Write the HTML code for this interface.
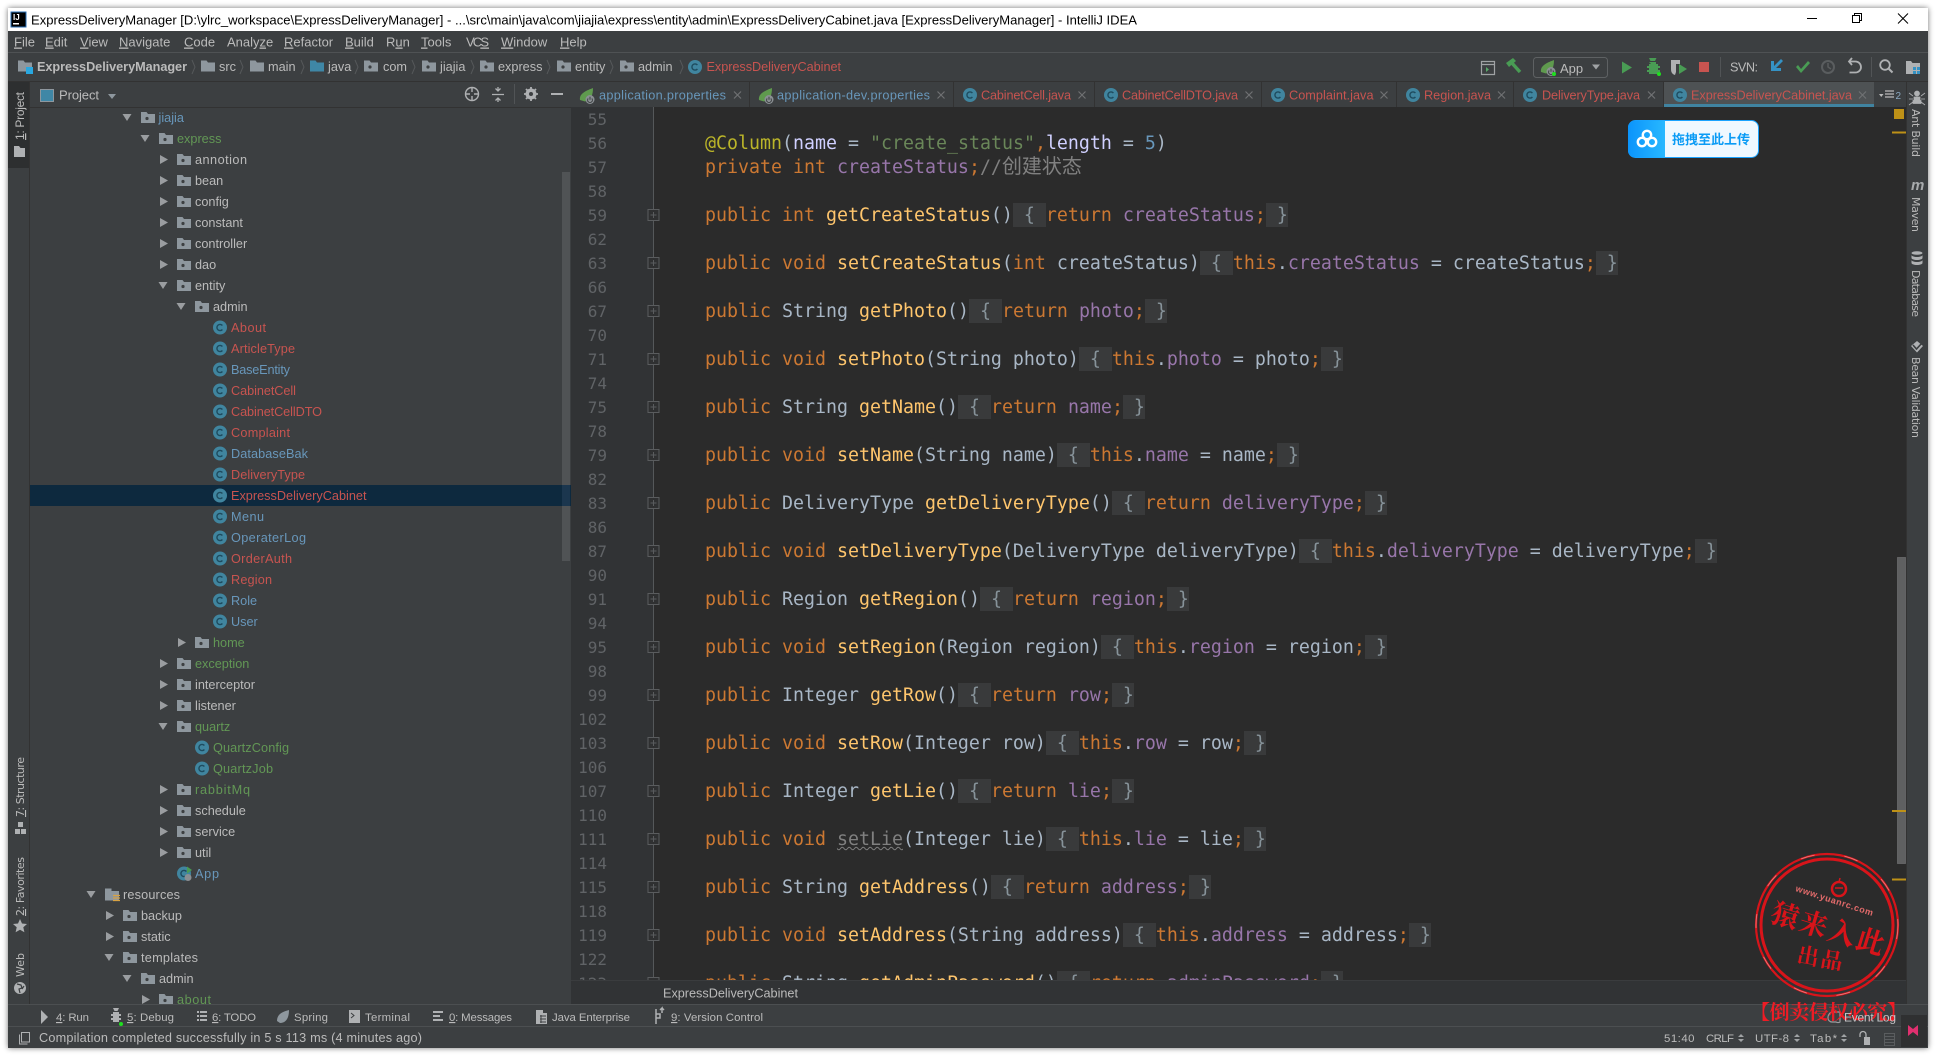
<!DOCTYPE html>
<html><head><meta charset="utf-8"><title>ExpressDeliveryManager</title>
<style>
html,body{margin:0;padding:0;background:#fff;width:1937px;height:1057px;overflow:hidden}
svg{position:absolute;left:0;top:0}
text{font-family:"Liberation Sans","Noto Sans CJK SC",sans-serif;font-size:12.7px;fill:#bbb;white-space:pre}
.r{fill:#c75450}.b{fill:#6897bb}.g{fill:#629755}
.m{font-size:13px;fill:#bbb}
.n{font-family:"DejaVu Sans Mono",monospace;font-size:16px;fill:#606366;text-anchor:end}
.v{font-family:"DejaVu Sans",sans-serif;font-size:11px;fill:#bbb}
.tw{font-size:11.4px}
#code{position:absolute;left:571px;top:107px;width:1335px;height:873px;overflow:hidden}
#code pre{position:absolute;left:134px;margin:0;padding-top:1px;font:18.27px/24px "DejaVu Sans Mono",monospace;color:#a9b7c6;white-space:pre}
#code i{font-style:normal}
.k{color:#cc7832}.y{color:#ffc66d}.f{color:#9876aa}.s{color:#6a8759}.u{color:#6897bb}.a{color:#bbb529}.l{color:#d0d0ff}
.x{display:inline-block;height:23px;background:#393a3b;box-shadow:0 -1px 0 #393a3b;color:#87939a}
.c{color:#808080;font-family:"Noto Sans CJK SC",sans-serif;font-size:20px;line-height:0}
.w{color:#808080;text-decoration:underline wavy #808080 1px}
</style></head><body>
<svg width="1937" height="1057" viewBox="0 0 1937 1057" xmlns="http://www.w3.org/2000/svg">
<defs>
<filter id="bl" x="-5%" y="-5%" width="110%" height="110%"><feGaussianBlur stdDeviation="3"/></filter>
<path id="ac" d="M-3-4.500L5 0-3 4.500z" fill="#9a9da0"/>
<path id="ad" d="M-4.500-3.500H4.500L0 3.500z" fill="#9a9da0"/>
<g id="fd"><path d="M0-5.500h5.500l1.500 2H14V5.500H0z" fill="#8e979e"/><circle cx="6" cy="1" r="1.600" fill="#3c3f41"/></g>
<path id="fp" d="M0-5.500h5.500l1.500 2H14V5.500H0z" fill="#8e979e"/>
<g id="cc"><circle r="7" fill="#40859f"/><path d="M2.400-2A3.100 3.100 0 1 0 2.400 2" fill="none" stroke="#1e4b5e" stroke-width="1.400"/></g>
<g id="sp"><path d="M0 10C-1 4 5 1 13-2 13 5 11 10 5 11.500z" fill="#5f9a4e"/><circle cx="10" cy="9.500" r="4.500" fill="#8a8f93"/><path d="M8.200 8.500a2.400 2.400 0 1 0 3.600 0M10 6.800v3" fill="none" stroke="#3c3f41" stroke-width="1"/></g>
<path id="ch" d="M0-7L3 0 0 7" fill="none" stroke="#55585a" stroke-width="1"/>
<path id="xx" d="M-3.500-3.500L3.500 3.500M3.500-3.500L-3.500 3.500" stroke="#6f7173" stroke-width="1.200" fill="none"/>
<g id="fb"><rect x="-5.500" y="-5.500" width="11" height="11" fill="#2f3031" stroke="#5a5c5e"/><path d="M-3 0H3M0-3V3" stroke="#5a5c5e"/></g>
<path id="ud" d="M-3-1L0-4 3-1zM-3 1L0 4 3 1z" fill="#a0a3a5"/>
</defs>
<rect x="8" y="8" width="1920" height="1040" fill="#000" opacity=".55" filter="url(#bl)"/>
<!-- title -->
<rect x="8" y="8" width="1920" height="23" fill="#fff"/>
<rect x="11" y="12" width="15" height="15" fill="#000" stroke="#2a6fb5" stroke-width="1"/>
<text x="13" y="20" style="font-size:8px;font-weight:bold;fill:#fff">IJ</text><rect x="13" y="23" width="6" height="1.500" fill="#fff"/>
<text x="31" y="24.500" textLength="1106" lengthAdjust="spacingAndGlyphs" style="fill:#000;font-size:12.7px">ExpressDeliveryManager [D:\ylrc_workspace\ExpressDeliveryManager] - ...\src\main\java\com\jiajia\express\entity\admin\ExpressDeliveryCabinet.java [ExpressDeliveryManager] - IntelliJ IDEA</text>
<path d="M1807 18.500H1817" stroke="#000" stroke-width="1"/>
<path d="M1852.500 15.500h7v7h-7zM1854.500 15.500v-2h7v7h-2" fill="none" stroke="#000"/>
<path d="M1898 13.500L1908 23.500M1908 13.500L1898 23.500" stroke="#000"/>
<!-- body -->
<rect x="8" y="31" width="1920" height="1017" fill="#3c3f41"/>
<rect x="8" y="52" width="1920" height="1" fill="#4f5254"/>
<rect x="8" y="81" width="1920" height="1" fill="#323232"/>
<!-- menu -->
<g class="mm">
<text class="m" x="14" y="46.500"><tspan text-decoration="underline">F</tspan>ile</text>
<text class="m" x="45" y="46.500"><tspan text-decoration="underline">E</tspan>dit</text>
<text class="m" x="80" y="46.500"><tspan text-decoration="underline">V</tspan>iew</text>
<text class="m" x="119" y="46.500"><tspan text-decoration="underline">N</tspan>avigate</text>
<text class="m" x="184" y="46.500"><tspan text-decoration="underline">C</tspan>ode</text>
<text class="m" x="227" y="46.500">Analy<tspan text-decoration="underline">z</tspan>e</text>
<text class="m" x="284" y="46.500"><tspan text-decoration="underline">R</tspan>efactor</text>
<text class="m" x="345" y="46.500"><tspan text-decoration="underline">B</tspan>uild</text>
<text class="m" x="386" y="46.500">R<tspan text-decoration="underline">u</tspan>n</text>
<text class="m" x="421" y="46.500"><tspan text-decoration="underline">T</tspan>ools</text>
<text class="m" x="466" y="46.500" textLength="23">VC<tspan text-decoration="underline">S</tspan></text>
<text class="m" x="501" y="46.500"><tspan text-decoration="underline">W</tspan>indow</text>
<text class="m" x="560" y="46.500"><tspan text-decoration="underline">H</tspan>elp</text>
</g>
<!-- nav bar -->
<use href="#fp" x="18" y="66"/><rect x="26" y="67" width="7" height="7" fill="#29a8e0"/>
<text x="37" y="71" textLength="150" style="font-weight:bold">ExpressDeliveryManager</text>
<use href="#ch" x="192" y="67"/>
<use href="#fp" x="201" y="66"/><text x="219" y="71">src</text><use href="#ch" x="240" y="67"/>
<use href="#fp" x="250" y="66"/><text x="268" y="71">main</text><use href="#ch" x="301" y="67"/>
<path transform="translate(310 66)" d="M0-5.500h5.500l1.500 2H14V5.500H0z" fill="#3f87a6"/><text x="328" y="71">java</text><use href="#ch" x="355" y="67"/>
<use href="#fd" x="364" y="66"/><text x="383" y="71">com</text><use href="#ch" x="412" y="67"/>
<use href="#fd" x="422" y="66"/><text x="440" y="71">jiajia</text><use href="#ch" x="471" y="67"/>
<use href="#fd" x="480" y="66"/><text x="498" y="71">express</text><use href="#ch" x="547" y="67"/>
<use href="#fd" x="557" y="66"/><text x="575" y="71">entity</text><use href="#ch" x="610" y="67"/>
<use href="#fd" x="620" y="66"/><text x="638" y="71">admin</text><use href="#ch" x="680" y="67"/>
<use href="#cc" x="695" y="67"/><text class="r" x="706.500" y="71" textLength="134.500">ExpressDeliveryCabinet</text>
<!-- toolbar -->
<path d="M1481.500 61.500h13v13h-13zM1481.500 64.500h13" fill="none" stroke="#a0a3a5" stroke-width="1.200"/><path d="M1486 67l3 2.500-3 2.500z" fill="#59a869"/>
<path d="M1506 63L1513 58 1516 61 1509 67z" fill="#499c54"/><path d="M1511 62L1520 72" stroke="#499c54" stroke-width="3.400"/>
<rect x="1533.500" y="57.500" width="74" height="20" rx="3" fill="none" stroke="#5e6163"/>
<use href="#sp" x="1541" y="62"/><circle cx="1554" cy="74" r="2" fill="#1fe01f"/>
<text x="1560" y="73" style="font-size:13px">App</text><path d="M1592 64.500h8l-4 5z" fill="#a0a3a5"/>
<path d="M1622 61.500L1632 67.500 1622 73.500z" fill="#499c54"/>
<path d="M1649 62h7v2h2v2h2v2h-2v2h2v2h-2v2h-9v-2h-2v-2h2v-2h-2v-2h2v-2h2z M1649 58l1.500 3h4.500l1.500-3" fill="#499c54"/><circle cx="1659" cy="74" r="2" fill="#1fe01f"/>
<path d="M1671 60h9v4h-4v8l-1 3c-3-1-4-3-4-6z" fill="#afb1b3"/><path d="M1679 64l8 5-8 5z" fill="#499c54"/>
<rect x="1699" y="62" width="10" height="10" fill="#c75450"/>
<rect x="1720" y="57" width="1" height="20" fill="#515456"/>
<text x="1730" y="71.500" textLength="28">SVN:</text>
<path d="M1781 59l2 2-7 7h5v3h-10v-10h3v5z" fill="#3592c4"/>
<path d="M1796 67l2-2 3 4 7-8 2 2-9 10z" fill="#499c54"/>
<circle cx="1828" cy="67" r="6" fill="none" stroke="#5a5d5f" stroke-width="2"/><path d="M1828 63v4l3 2" fill="none" stroke="#5a5d5f" stroke-width="1.500"/>
<path d="M1852 58l-3 3.500 3 3.500M1849.500 61.500h6a4.800 4.800 0 0 1 0 11h-6" fill="none" stroke="#afb1b3" stroke-width="1.800"/>
<rect x="1871" y="57" width="1" height="20" fill="#515456"/>
<circle cx="1885" cy="65" r="4.800" fill="none" stroke="#afb1b3" stroke-width="1.800"/><path d="M1888.500 68.500l4 4" stroke="#afb1b3" stroke-width="2"/>
<path d="M1906 61h5l1.500 2H1920v11h-14z" fill="#afb1b3"/><rect x="1913" y="67" width="3" height="3" fill="#3592c4"/><rect x="1917" y="67" width="3" height="3" fill="#3592c4"/><rect x="1913" y="71" width="3" height="3" fill="#3592c4"/><rect x="1917" y="71" width="3" height="3" fill="#3592c4"/>
<!-- left strip -->
<rect x="8" y="82" width="21" height="86" fill="#2d2f30"/>
<rect x="29" y="82" width="1" height="922" fill="#323232"/>
<text class="v" transform="translate(24 140) rotate(-90)" textLength="48" style="font-family:'Liberation Sans';font-size:12px"><tspan text-decoration="underline">1</tspan>: Project</text>
<path d="M14 146h5l1.500 2H25v9H14z" fill="#afb1b3"/>
<text class="v" transform="translate(24 817) rotate(-90)" textLength="60"><tspan text-decoration="underline">7</tspan>: Structure</text>
<path d="M18 822h5v5h-5zM15 829h5v5h-5zM21 829h5v5h-5z" fill="#afb1b3"/>
<text class="v" transform="translate(24 916) rotate(-90)" textLength="59"><tspan text-decoration="underline">2</tspan>: Favorites</text>
<path d="M20 919l2 4.500 5 .5-3.700 3.300 1.100 5-4.400-2.600-4.400 2.600 1.100-5L13 924l5-.5z" fill="#afb1b3"/>
<text class="v" transform="translate(24 977) rotate(-90)" textLength="24">Web</text>
<circle cx="20" cy="988" r="6" fill="#afb1b3"/><path d="M17 984l4 1 1 3-3 1 1 4M24 986l-2 3" fill="none" stroke="#3c3f41" stroke-width="1.200"/>
<!-- project header -->
<rect x="40.500" y="89.500" width="13" height="12" fill="#3f87a6" stroke="#8e979e"/>
<text x="59" y="99.500" style="font-size:13px" textLength="40">Project</text><path d="M108 94h8l-4 5z" fill="#8e979e"/>
<circle cx="472" cy="94" r="6.500" fill="none" stroke="#afb1b3" stroke-width="1.400"/><path d="M472 87v5M472 96v5M465 94h5M474 94h5" stroke="#afb1b3" stroke-width="1.400"/>
<path d="M492 94.500h12M498 87v4M495.500 88.500l2.500 2.500 2.500-2.500M498 102v-4M495.500 100.500l2.500-2.500 2.500 2.500" fill="none" stroke="#afb1b3" stroke-width="1.300"/>
<rect x="514" y="84" width="1" height="20" fill="#515456"/>
<circle cx="531" cy="94" r="4" fill="none" stroke="#afb1b3" stroke-width="3"/><path d="M531 87v14M524 94h14M526 89l10 10M536 89l-10 10" stroke="#afb1b3" stroke-width="1.800"/><circle cx="531" cy="94" r="2" fill="#3c3f41"/>
<rect x="551" y="93" width="12" height="2" fill="#afb1b3"/>
<rect x="30" y="107" width="541" height="1" fill="#323232"/>
<!-- tree -->
<rect x="562" y="172" width="8" height="389" fill="#505355"/>
<rect x="30" y="485" width="541" height="21" fill="#0d293e"/>
<rect x="562" y="485" width="8" height="21" fill="#24405a" opacity=".6"/>
<g transform="translate(0 -.5)">
<use href="#ad" x="127" y="118"/><use href="#fd" x="141" y="118"/><text class="b" x="158.500" y="122.500">jiajia</text>
<use href="#ad" x="145" y="139"/><use href="#fd" x="159" y="139"/><text class="g" x="177" y="143.500">express</text>
<use href="#ac" x="163" y="160"/><use href="#fd" x="177" y="160"/><text x="195" y="164.500" textLength="52">annotion</text>
<use href="#ac" x="163" y="181"/><use href="#fd" x="177" y="181"/><text x="195" y="185.500">bean</text>
<use href="#ac" x="163" y="202"/><use href="#fd" x="177" y="202"/><text x="195" y="206.500">config</text>
<use href="#ac" x="163" y="223"/><use href="#fd" x="177" y="223"/><text x="195" y="227.500">constant</text>
<use href="#ac" x="163" y="244"/><use href="#fd" x="177" y="244"/><text x="195" y="248.500">controller</text>
<use href="#ac" x="163" y="265"/><use href="#fd" x="177" y="265"/><text x="195" y="269.500">dao</text>
<use href="#ad" x="163" y="286"/><use href="#fd" x="177" y="286"/><text x="195" y="290.500">entity</text>
<use href="#ad" x="181" y="307"/><use href="#fd" x="195" y="307"/><text x="213" y="311.500">admin</text>
<use href="#cc" x="220" y="328"/><text class="r" x="231" y="332.500" textLength="35">About</text>
<use href="#cc" x="220" y="349"/><text class="r" x="231" y="353.500" textLength="64">ArticleType</text>
<use href="#cc" x="220" y="370"/><text class="b" x="231" y="374.500" textLength="59">BaseEntity</text>
<use href="#cc" x="220" y="391"/><text class="r" x="231" y="395.500" textLength="65">CabinetCell</text>
<use href="#cc" x="220" y="412"/><text class="r" x="231" y="416.500" textLength="91">CabinetCellDTO</text>
<use href="#cc" x="220" y="433"/><text class="r" x="231" y="437.500" textLength="59">Complaint</text>
<use href="#cc" x="220" y="454"/><text class="b" x="231" y="458.500" textLength="77">DatabaseBak</text>
<use href="#cc" x="220" y="475"/><text class="r" x="231" y="479.500" textLength="74">DeliveryType</text>
<use href="#cc" x="220" y="496"/><text class="r" x="231" y="500.500" textLength="135.500">ExpressDeliveryCabinet</text>
<use href="#cc" x="220" y="517"/><text class="b" x="231" y="521.500" textLength="33">Menu</text>
<use href="#cc" x="220" y="538"/><text class="b" x="231" y="542.500" textLength="75">OperaterLog</text>
<use href="#cc" x="220" y="559"/><text class="r" x="231" y="563.500" textLength="61">OrderAuth</text>
<use href="#cc" x="220" y="580"/><text class="r" x="231" y="584.500" textLength="41">Region</text>
<use href="#cc" x="220" y="601"/><text class="b" x="231" y="605.500">Role</text>
<use href="#cc" x="220" y="622"/><text class="b" x="231" y="626.500">User</text>
<use href="#ac" x="181" y="643"/><use href="#fd" x="195" y="643"/><text class="g" x="213" y="647.500">home</text>
<use href="#ac" x="163" y="664"/><use href="#fd" x="177" y="664"/><text class="g" x="195" y="668.500">exception</text>
<use href="#ac" x="163" y="685"/><use href="#fd" x="177" y="685"/><text x="195" y="689.500">interceptor</text>
<use href="#ac" x="163" y="706"/><use href="#fd" x="177" y="706"/><text x="195" y="710.500">listener</text>
<use href="#ad" x="163" y="727"/><use href="#fd" x="177" y="727"/><text class="g" x="195" y="731.500">quartz</text>
<use href="#cc" x="202" y="748"/><text class="g" x="213" y="752.500" textLength="76">QuartzConfig</text>
<use href="#cc" x="202" y="769"/><text class="g" x="213" y="773.500" textLength="60">QuartzJob</text>
<use href="#ac" x="163" y="790"/><use href="#fd" x="177" y="790"/><text class="g" x="195" y="794.500" textLength="55">rabbitMq</text>
<use href="#ac" x="163" y="811"/><use href="#fd" x="177" y="811"/><text x="195" y="815.500">schedule</text>
<use href="#ac" x="163" y="832"/><use href="#fd" x="177" y="832"/><text x="195" y="836.500">service</text>
<use href="#ac" x="163" y="853"/><use href="#fd" x="177" y="853"/><text x="195" y="857.500">util</text>
<use href="#cc" x="184" y="874"/><circle cx="188" cy="878" r="3.500" fill="#8a8f93"/><path d="M187 867l5 3.500-5 3.500z" fill="#499c54"/><text class="b" x="195" y="878.500" textLength="24">App</text>
<use href="#ad" x="91" y="895"/><path transform="translate(105 895)" d="M0-6h6.500v2.500H14V6H0z" fill="#8e979e"/><path d="M113 896h7M113 898.500h7M113 901h7" stroke="#d9a343" stroke-width="1.200"/><text x="123" y="899.500" textLength="57">resources</text>
<use href="#ac" x="109" y="916"/><use href="#fd" x="123" y="916"/><text x="141" y="920.500">backup</text>
<use href="#ac" x="109" y="937"/><use href="#fd" x="123" y="937"/><text x="141" y="941.500">static</text>
<use href="#ad" x="109" y="958"/><use href="#fd" x="123" y="958"/><text x="141" y="962.500" textLength="57">templates</text>
<use href="#ad" x="127" y="979"/><use href="#fd" x="141" y="979"/><text x="159" y="983.500">admin</text>
<use href="#ac" x="145" y="1000"/><use href="#fd" x="159" y="1000"/><text class="g" x="177" y="1004.500" textLength="34">about</text>
</g>
<!-- tabs -->
<rect x="1664" y="82" width="210" height="25" fill="#4e5254"/>
<rect x="1664" y="104" width="210" height="3" fill="#4083a0"/>
<use href="#sp" x="580" y="90"/><text class="b" x="599" y="99.500" textLength="127">application.properties</text><use href="#xx" x="737.500" y="95"/>
<use href="#sp" x="759" y="90"/><text class="b" x="777" y="99.500" textLength="153">application-dev.properties</text><use href="#xx" x="941" y="95"/>
<use href="#cc" x="970" y="95"/><text class="r" x="981" y="99.500" textLength="90">CabinetCell.java</text><use href="#xx" x="1082" y="95"/>
<use href="#cc" x="1111" y="95"/><text class="r" x="1122" y="99.500" textLength="116">CabinetCellDTO.java</text><use href="#xx" x="1249" y="95"/>
<use href="#cc" x="1278" y="95"/><text class="r" x="1289" y="99.500" textLength="84.500">Complaint.java</text><use href="#xx" x="1384" y="95"/>
<use href="#cc" x="1413" y="95"/><text class="r" x="1424" y="99.500" textLength="67">Region.java</text><use href="#xx" x="1501.500" y="95"/>
<use href="#cc" x="1530" y="95"/><text class="r" x="1542" y="99.500" textLength="98">DeliveryType.java</text><use href="#xx" x="1651.500" y="95"/>
<use href="#cc" x="1680" y="95"/><text class="r" x="1691" y="99.500" textLength="161">ExpressDeliveryCabinet.java</text><use href="#xx" x="1862.500" y="95"/>
<rect x="749" y="82" width="1" height="25" fill="#323232"/><rect x="953" y="82" width="1" height="25" fill="#323232"/><rect x="1094" y="82" width="1" height="25" fill="#323232"/><rect x="1261" y="82" width="1" height="25" fill="#323232"/><rect x="1396" y="82" width="1" height="25" fill="#323232"/><rect x="1513" y="82" width="1" height="25" fill="#323232"/><rect x="1663" y="82" width="1" height="25" fill="#323232"/>
<path d="M1879 94h4.500l-2.250 3z" fill="#bbb"/><path d="M1885 91h9M1885 94h9M1885 97h9" stroke="#bbb" stroke-width="1.300"/>
<text x="1895.500" y="99" style="font-size:10px;fill:#8aa8c0">2</text>
<!-- editor -->
<rect x="571" y="107" width="1335" height="873" fill="#2b2b2b"/>
<rect x="571" y="107" width="83" height="873" fill="#313335"/>
<rect x="653" y="107" width="1" height="873" fill="#55585a"/>
<g class="nn">
<text class="n" x="607" y="125">55</text><text class="n" x="607" y="149">56</text><text class="n" x="607" y="173">57</text><text class="n" x="607" y="197">58</text><text class="n" x="607" y="221">59</text><text class="n" x="607" y="245">62</text><text class="n" x="607" y="269">63</text><text class="n" x="607" y="293">66</text><text class="n" x="607" y="317">67</text><text class="n" x="607" y="341">70</text><text class="n" x="607" y="365">71</text><text class="n" x="607" y="389">74</text><text class="n" x="607" y="413">75</text><text class="n" x="607" y="437">78</text><text class="n" x="607" y="461">79</text><text class="n" x="607" y="485">82</text><text class="n" x="607" y="509">83</text><text class="n" x="607" y="533">86</text><text class="n" x="607" y="557">87</text><text class="n" x="607" y="581">90</text><text class="n" x="607" y="605">91</text><text class="n" x="607" y="629">94</text><text class="n" x="607" y="653">95</text><text class="n" x="607" y="677">98</text><text class="n" x="607" y="701">99</text><text class="n" x="607" y="725">102</text><text class="n" x="607" y="749">103</text><text class="n" x="607" y="773">106</text><text class="n" x="607" y="797">107</text><text class="n" x="607" y="821">110</text><text class="n" x="607" y="845">111</text><text class="n" x="607" y="869">114</text><text class="n" x="607" y="893">115</text><text class="n" x="607" y="917">118</text><text class="n" x="607" y="941">119</text><text class="n" x="607" y="965">122</text><text class="n" x="607" y="989">123</text>
</g>
<use href="#fb" x="653.500" y="215"/><use href="#fb" x="653.500" y="263"/><use href="#fb" x="653.500" y="311"/><use href="#fb" x="653.500" y="359"/><use href="#fb" x="653.500" y="407"/><use href="#fb" x="653.500" y="455"/><use href="#fb" x="653.500" y="503"/><use href="#fb" x="653.500" y="551"/><use href="#fb" x="653.500" y="599"/><use href="#fb" x="653.500" y="647"/><use href="#fb" x="653.500" y="695"/><use href="#fb" x="653.500" y="743"/><use href="#fb" x="653.500" y="791"/><use href="#fb" x="653.500" y="839"/><use href="#fb" x="653.500" y="887"/><use href="#fb" x="653.500" y="935"/><use href="#fb" x="653.500" y="983"/>
<!-- breadcrumb & bars -->
<rect x="571" y="980" width="1335" height="24" fill="#313335"/>
<rect x="571" y="980" width="1335" height="1" fill="#3a3c3e"/>
<text x="663" y="997.500" textLength="135">ExpressDeliveryCabinet</text>
<rect x="8" y="1004" width="1920" height="44" fill="#3c3f41"/>
<rect x="8" y="1004" width="1920" height="1" fill="#4c4f51"/>
<rect x="8" y="1026" width="1920" height="1" fill="#4c4f51"/>
<!-- scrollbar -->
<rect x="1897.500" y="557.500" width="8" height="306" fill="#5f6061" stroke="#6a6b6c" stroke-width=".8"/>
<rect x="1894" y="109" width="10" height="10" fill="#be9117"/>
<rect x="1892" y="131.500" width="14" height="2" fill="#be9117"/>
<rect x="1892" y="810" width="14" height="2" fill="#be9117"/>
<rect x="1892" y="878.500" width="14" height="2" fill="#be9117"/>
<!-- right strip -->
<rect x="1906" y="82" width="22" height="922" fill="#3c3f41"/>
<rect x="1906" y="82" width="1" height="922" fill="#323232"/>
<path d="M1917 91a2.500 2.500 0 1 1 0 5 2.500 2.500 0 1 1 0-5zM1914 97h6v3h-6zM1913 100.500h8v3h-8zM1909 93l4 3M1925 93l-4 3M1909 99h4M1925 99h-4M1909 105l4-3M1925 105l-4-3" fill="#afb1b3" stroke="#afb1b3" stroke-width=".8"/>
<text class="v" transform="translate(1912 109) rotate(90)" textLength="48">Ant Build</text>
<text x="1911" y="190" style="font-size:15px;font-weight:bold;font-style:italic;fill:#a8abad" textLength="13">m</text>
<text class="v" transform="translate(1912 197) rotate(90)" textLength="35">Maven</text>
<ellipse cx="1917" cy="253" rx="5.500" ry="1.800" fill="#afb1b3"/><path d="M1911.500 255v3c0 1 2.500 2 5.500 2s5.500-1 5.500-2v-3c0 1-2.500 2-5.500 2s-5.500-1-5.500-2zM1911.500 260v3c0 1 2.500 2 5.500 2s5.500-1 5.500-2v-3c0 1-2.500 2-5.500 2s-5.500-1-5.500-2z" fill="#afb1b3"/>
<text class="v" transform="translate(1912 270) rotate(90)" textLength="47">Database</text>
<path d="M1917 341l6 5-6 6.500-6-6.500z" fill="#afb1b3"/><path d="M1913 345l3.500 4 5.500-6" fill="none" stroke="#3c3f41" stroke-width="1.600"/>
<text class="v" transform="translate(1912 357) rotate(90)" textLength="81">Bean Validation</text>
<!-- tool window buttons -->
<path d="M41 1010l7 7-7 7z" fill="#afb1b3"/><text class="tw" x="56" y="1021" textLength="33"><tspan text-decoration="underline">4</tspan>: Run</text>
<path d="M113 1012h6v2h2v2h-2v2h2v2h-2v2h-6v-2h-2v-2h2v-2h-2v-2h2zM113 1008l1.500 3h3l1.500-3" fill="#afb1b3"/><circle cx="121" cy="1024" r="2" fill="#1fe01f"/><text class="tw" x="127" y="1021" textLength="47"><tspan text-decoration="underline">5</tspan>: Debug</text>
<path d="M197 1011h2v2h-2zM197 1015h2v2h-2zM197 1019h2v2h-2zM200 1011h7v2h-7zM200 1015h7v2h-7zM200 1019h7v2h-7z" fill="#afb1b3"/><text class="tw" x="212" y="1021" textLength="44"><tspan text-decoration="underline">6</tspan>: TODO</text>
<path d="M277 1021c0-6 4-9 12-11 0 8-3 13-9 13z" fill="#8e979e"/><text class="tw" x="294" y="1021" textLength="34">Spring</text>
<rect x="349" y="1010" width="11" height="13" fill="#afb1b3"/><path d="M351 1013l3 2.500-3 2.500" fill="none" stroke="#3c3f41"/><text class="tw" x="365" y="1021" textLength="45">Terminal</text>
<path d="M433 1011h10v2h-10zM433 1015h7v2h-7zM433 1019h10v2h-10z" fill="#afb1b3"/><text class="tw" x="449" y="1021" textLength="63"><tspan text-decoration="underline">0</tspan>: Messages</text>
<path d="M536 1010h7v3h4v11h-11z" fill="#afb1b3"/><path d="M540 1016h6M540 1019h6M540 1022h6M541 1015v8" stroke="#3c3f41"/><text class="tw" x="552" y="1021" textLength="78">Java Enterprise</text>
<path d="M656 1009v15M656 1014h4v4h-4M662 1013v-5l-2 2M662 1008l2 2" fill="none" stroke="#afb1b3" stroke-width="1.500"/><text class="tw" x="671" y="1021" textLength="92"><tspan text-decoration="underline">9</tspan>: Version Control</text>
<path d="M1832 1012h8v10a4 4 0 0 1-4 0h-4a4 4 0 0 1-4-4 6 6 0 0 1 4-6z" fill="none" stroke="#9a9da0" stroke-width="1.200"/>
<!-- status bar -->
<path d="M21.500 1032.500h8v9.500h-8zM19.500 1034.500v9.500h8" fill="none" stroke="#afb1b3"/>
<text x="39" y="1042" textLength="383">Compilation completed successfully in 5 s 113 ms (4 minutes ago)</text>
<text class="tw" x="1664" y="1042" textLength="30.500">51:40</text><text class="tw" x="1706" y="1042" textLength="28">CRLF</text><use href="#ud" x="1741" y="1038"/>
<text class="tw" x="1755" y="1042" textLength="34">UTF-8</text><use href="#ud" x="1797" y="1038"/>
<text class="tw" x="1810" y="1042" textLength="27">Tab*</text><use href="#ud" x="1844" y="1038"/>
<rect x="1864" y="1037" width="6" height="8" fill="#afb1b3"/><path d="M1860 1037v-2.500a3 3 0 0 1 6 0V1037" fill="none" stroke="#afb1b3" stroke-width="1.300"/>
<path d="M1884.500 1033.500h10v12h-10zM1884.500 1036.500h10M1884.500 1039.500h10M1884.500 1042.500h10" fill="none" stroke="#5a5d5f"/>
<rect x="1901" y="1015" width="26" height="32" fill="#2f3031"/>
<path d="M1908 1025l5 4 5-4 0 11-5-4-5 4z" fill="#e0306f"/>
</svg>
<div id="code">
<pre style="top:24px"><i class="a">@Column</i>(<i class="l">name</i> = <i class="s">"create_status"</i><i class="k">,</i><i class="l">length</i> = <i class="u">5</i>)</pre>
<pre style="top:48px"><i class="k">private int </i><i class="f">createStatus</i><i class="k">;</i><i style="color:#808080">//</i><i class="c">创建状态</i></pre>
<pre style="top:96px"><i class="k">public int </i><i class="y">getCreateStatus</i>()<i class="x"> { </i><i class="k">return </i><i class="f">createStatus</i><i class="k">;</i><i class="x"> }</i></pre>
<pre style="top:144px"><i class="k">public void </i><i class="y">setCreateStatus</i>(<i class="k">int </i>createStatus)<i class="x"> { </i><i class="k">this</i>.<i class="f">createStatus</i> = createStatus<i class="k">;</i><i class="x"> }</i></pre>
<pre style="top:192px"><i class="k">public </i>String <i class="y">getPhoto</i>()<i class="x"> { </i><i class="k">return </i><i class="f">photo</i><i class="k">;</i><i class="x"> }</i></pre>
<pre style="top:240px"><i class="k">public void </i><i class="y">setPhoto</i>(String photo)<i class="x"> { </i><i class="k">this</i>.<i class="f">photo</i> = photo<i class="k">;</i><i class="x"> }</i></pre>
<pre style="top:288px"><i class="k">public </i>String <i class="y">getName</i>()<i class="x"> { </i><i class="k">return </i><i class="f">name</i><i class="k">;</i><i class="x"> }</i></pre>
<pre style="top:336px"><i class="k">public void </i><i class="y">setName</i>(String name)<i class="x"> { </i><i class="k">this</i>.<i class="f">name</i> = name<i class="k">;</i><i class="x"> }</i></pre>
<pre style="top:384px"><i class="k">public </i>DeliveryType <i class="y">getDeliveryType</i>()<i class="x"> { </i><i class="k">return </i><i class="f">deliveryType</i><i class="k">;</i><i class="x"> }</i></pre>
<pre style="top:432px"><i class="k">public void </i><i class="y">setDeliveryType</i>(DeliveryType deliveryType)<i class="x"> { </i><i class="k">this</i>.<i class="f">deliveryType</i> = deliveryType<i class="k">;</i><i class="x"> }</i></pre>
<pre style="top:480px"><i class="k">public </i>Region <i class="y">getRegion</i>()<i class="x"> { </i><i class="k">return </i><i class="f">region</i><i class="k">;</i><i class="x"> }</i></pre>
<pre style="top:528px"><i class="k">public void </i><i class="y">setRegion</i>(Region region)<i class="x"> { </i><i class="k">this</i>.<i class="f">region</i> = region<i class="k">;</i><i class="x"> }</i></pre>
<pre style="top:576px"><i class="k">public </i>Integer <i class="y">getRow</i>()<i class="x"> { </i><i class="k">return </i><i class="f">row</i><i class="k">;</i><i class="x"> }</i></pre>
<pre style="top:624px"><i class="k">public void </i><i class="y">setRow</i>(Integer row)<i class="x"> { </i><i class="k">this</i>.<i class="f">row</i> = row<i class="k">;</i><i class="x"> }</i></pre>
<pre style="top:672px"><i class="k">public </i>Integer <i class="y">getLie</i>()<i class="x"> { </i><i class="k">return </i><i class="f">lie</i><i class="k">;</i><i class="x"> }</i></pre>
<pre style="top:720px"><i class="k">public void </i><i class="w">setLie</i>(Integer lie)<i class="x"> { </i><i class="k">this</i>.<i class="f">lie</i> = lie<i class="k">;</i><i class="x"> }</i></pre>
<pre style="top:768px"><i class="k">public </i>String <i class="y">getAddress</i>()<i class="x"> { </i><i class="k">return </i><i class="f">address</i><i class="k">;</i><i class="x"> }</i></pre>
<pre style="top:816px"><i class="k">public void </i><i class="y">setAddress</i>(String address)<i class="x"> { </i><i class="k">this</i>.<i class="f">address</i> = address<i class="k">;</i><i class="x"> }</i></pre>
<pre style="top:864px"><i class="k">public </i>String <i class="y">getAdminPassword</i>()<i class="x"> { </i><i class="k">return </i><i class="f">adminPassword</i><i class="k">;</i><i class="x"> }</i></pre>
</div>
<svg width="1937" height="1057" viewBox="0 0 1937 1057" xmlns="http://www.w3.org/2000/svg">
<defs><linearGradient id="bg" x1="0" x2="1" y1="0" y2="0"><stop offset="0" stop-color="#0b94fb"/><stop offset="1" stop-color="#28b8ff"/></linearGradient></defs>
<!-- upload widget -->
<rect x="1628.500" y="120.500" width="130" height="37" rx="7" fill="#eff8ff" stroke="#1aa3ff"/>
<path d="M1635 120.500h30v37h-30a7 7 0 0 1-7-7v-23a7 7 0 0 1 7-7z" fill="url(#bg)"/>
<circle cx="1647" cy="135" r="4.200" fill="none" stroke="#fff" stroke-width="2.400"/><circle cx="1642" cy="142" r="4.200" fill="none" stroke="#fff" stroke-width="2.400"/><circle cx="1652" cy="142" r="4.200" fill="none" stroke="#fff" stroke-width="2.400"/>
<text x="1672" y="144" textLength="78" style="font-family:'Noto Sans CJK SC',sans-serif;font-size:13px;font-weight:bold;fill:#0a9bf5">拖拽至此上传</text>
<!-- stamp -->
<circle cx="1827" cy="925" r="71" fill="none" stroke="#d8141a" stroke-width="2.200"/>
<circle cx="1827" cy="925" r="66" fill="none" stroke="#d8141a" stroke-width="3"/>
<circle cx="1827" cy="925" r="71" fill="none" stroke="#e8a0a0" stroke-width=".8" stroke-dasharray="14 30" opacity=".8"/>
<circle cx="1839" cy="889" r="7" fill="none" stroke="#d8141a" stroke-width="2.500"/><path d="M1839 882l1-4" stroke="#d8141a" stroke-width="1.500"/><path d="M1835 888h8" stroke="#d8141a" stroke-width="1.500"/>
<text transform="translate(1795 891) rotate(18)" textLength="81" style="font-size:9px;font-weight:bold;fill:#e06a6a">www.yuanrc.com</text>
<text transform="translate(1769 921) rotate(17)" textLength="117" style="font-family:'Noto Serif CJK SC',serif;font-size:28px;font-weight:bold;fill:#d8141a">猿来入此</text>
<text transform="translate(1796 962) rotate(10)" textLength="46" style="font-family:'Noto Serif CJK SC',serif;font-size:22px;font-weight:bold;fill:#d8141a">出品</text>
<text x="1750" y="1019" textLength="157" style="font-family:'Noto Serif CJK SC',serif;font-size:20px;font-weight:bold;fill:#ee1c25">【倒卖侵权必究】</text>
<text x="1844" y="1021.500" textLength="52" style="font-size:12px;fill:#c4c6c8">Event Log</text>
</svg>
</body></html>
